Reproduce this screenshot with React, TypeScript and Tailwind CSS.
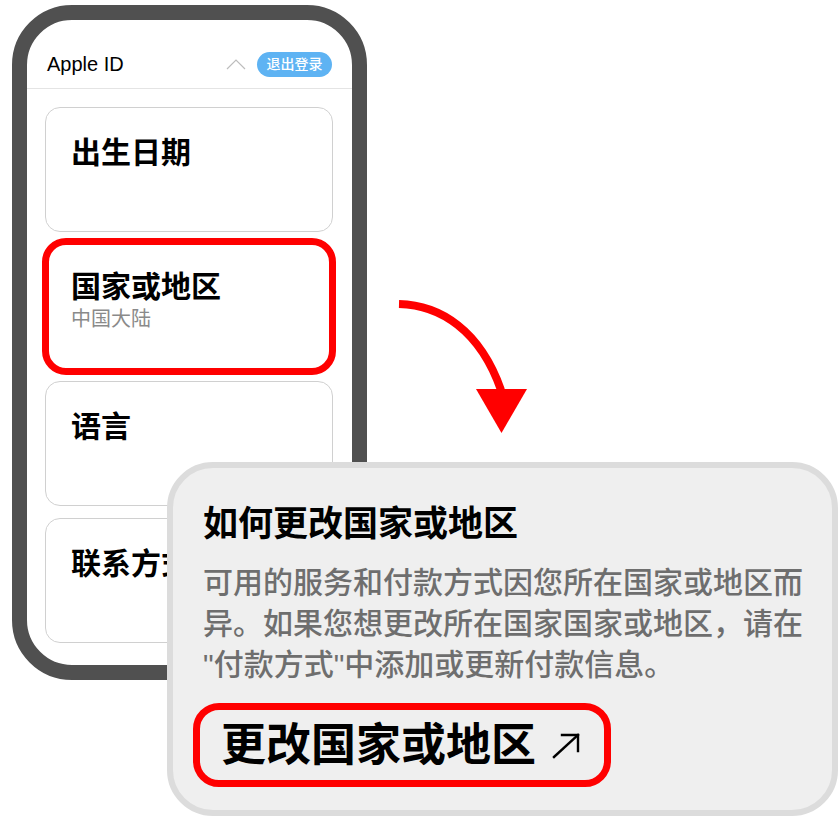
import React from "react";

const cjk = { fontFamily: '"Liberation Sans", "Noto Sans CJK SC", sans-serif' };

function ArrowUpRight() {
  return (
    <svg width="30" height="28" viewBox="0 0 30 28" fill="none" stroke="#000" strokeWidth="2.4" strokeLinecap="square">
      <path d="M3 25 L27 3" />
      <path d="M11 3 H27 V19" />
    </svg>
  );
}

function Card({ title, subtitle, top = "pt-[27px]" }: { title: string; subtitle?: string; top?: string }) {
  return (
    <div className={`h-[125px] rounded-[15px] border-[1.5px] border-[#d0d0d0] bg-white pl-[25px] ${top}`}>
      <p className="text-[30px] font-semibold leading-[35px] text-black">{title}</p>
      {subtitle && <p className="mt-[3px] text-[20px] leading-[24px] text-[#8a8a8a]">{subtitle}</p>}
    </div>
  );
}

export default function App() {
  return (
    <div className="relative h-[840px] w-[840px] overflow-hidden bg-white" style={cjk}>
      {/* phone */}
      <div className="ml-[12px] mt-[5px] h-[675px] w-[355px] overflow-hidden rounded-[60px] border-[15px] border-[#505050] bg-white">
        <div className="flex h-[69px] items-center border-b border-[#e4e4e4] pl-[20px] pr-[20px] pt-[20px]">
          <span className="flex-1 text-[20px] text-black">Apple ID</span>
          <svg width="20" height="12" viewBox="0 0 20 12" fill="none" stroke="#bdbdbd" strokeWidth="1.2" className="mr-[11px]">
            <path d="M1 11 L10 2 L19 11" />
          </svg>
          <span className="flex h-[25px] w-[75px] items-center justify-center rounded-full bg-[#5eb3f3] text-[14px] font-medium text-white">
            退出登录
          </span>
        </div>

        <div className="flex flex-col gap-[12px] pl-[18px] pr-[19px] pt-[18px]">
          <Card title="出生日期" />
          <div className="relative">
            <div className="h-[125px] rounded-[15px] bg-white pl-[26px] pt-[25px]">
              <p className="text-[30px] font-semibold leading-[35px] text-black">国家或地区</p>
              <p className="mt-[3px] text-[20px] leading-[24px] text-[#8a8a8a]">中国大陆</p>
            </div>
            <div className="absolute -inset-x-[3px] -inset-y-[6px] rounded-[24px] border-[7px] border-[#ff0000]" />
          </div>
          <Card title="语言" />
          <Card title="联系方式" />
        </div>
      </div>

      {/* red curved arrow */}
      <svg className="absolute left-0 top-0" width="840" height="840" viewBox="0 0 840 840" fill="none">
        <path d="M399 304 C440 305 480 330 501 390" stroke="#ff0000" strokeWidth="8" />
        <path d="M476 389 L527 389 L501.5 433 Z" fill="#ff0000" />
      </svg>

      {/* help popup */}
      <div className="absolute left-[167px] top-[462px] h-[354px] w-[671px] rounded-[46px] border-[6px] border-[#dcdcdc] bg-[#efefef] pl-[30px] pt-[35px]">
        <p className="text-[35px] font-semibold leading-[41px] text-black">如何更改国家或地区</p>
        <div className="mt-[18px] text-[30px] font-medium leading-[41px] text-[#6e6e6e]">
          <p className="whitespace-nowrap">可用的服务和付款方式因您所在国家或地区而</p>
          <p className="whitespace-nowrap">异。如果您想更改所在国家国家或地区，请在</p>
          <p className="whitespace-nowrap">"付款方式"中添加或更新付款信息。</p>
        </div>
        <div className="-ml-[10px] mt-[18px] flex h-[84px] w-[418px] items-center rounded-[26px] border-[7px] border-[#ff0000] pl-[21px]">
          <span className="text-[45px] font-bold leading-none text-black">更改国家或地区</span>
          <span className="ml-[15px] mt-[2px]">
            <ArrowUpRight />
          </span>
        </div>
      </div>
    </div>
  );
}
